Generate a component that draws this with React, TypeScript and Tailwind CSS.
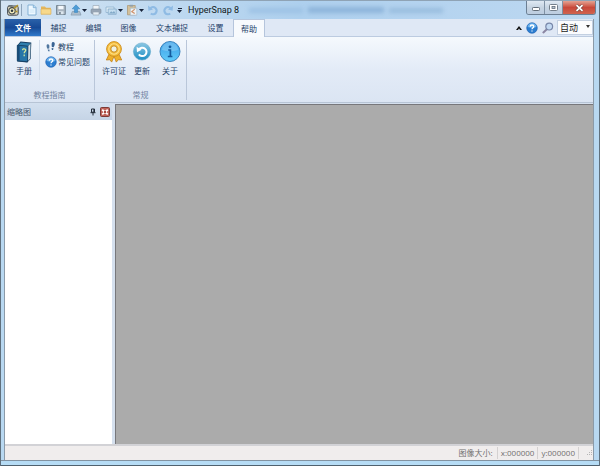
import React from 'react';

const tabs = ['捕捉', '编辑', '图像', '文本捕捉', '设置', '帮助'];

const Caret = () => (
  <svg viewBox="0 0 5 3" className="w-[5px] h-[3px] shrink-0 fill-[#17233a]">
    <path d="M0 0h5L2.5 3z" />
  </svg>
);

const LogoIcon = () => (
  <svg viewBox="0 0 12 12" className="w-3 h-3">
    <rect x=".6" y="2" width="10.6" height="9.2" rx="1.6" fill="#d9d3bb" stroke="#454b50" />
    <circle cx="5" cy="6.8" r="3.2" fill="#f7efbf" stroke="#38434b" strokeWidth="1.1" />
    <circle cx="5" cy="6.8" r="1.3" fill="#303a40" />
    <path d="M7 4.5l4-3.4M8.4 7.4h2" stroke="#b19326" strokeWidth="1.5" />
    <path d="M1.5 1.8h4" stroke="#5b6468" />
  </svg>
);

const NewIcon = () => (
  <svg viewBox="0 0 10 12" className="w-[10px] h-3">
    <path d="M1 1h5.5L9 3.5V11H1z" fill="#eef8ff" stroke="#78a9d0" strokeWidth=".9" />
    <path d="M6.3 1v2.7H9" fill="#b8dcf5" stroke="#78a9d0" strokeWidth=".8" />
    <path d="M2.5 6h5M2.5 8h5" stroke="#c2e0f4" strokeWidth=".8" />
  </svg>
);

const OpenIcon = () => (
  <svg viewBox="0 0 12 12" className="w-3 h-3">
    <path d="M1 2.5h4l1 1.3h4.8v6.4H1z" fill="#e4b65a" />
    <path d="M1 5h10v5.2H1z" fill="#f7d98b" stroke="#d8ab54" strokeWidth=".6" />
  </svg>
);

const SaveIcon = () => (
  <svg viewBox="0 0 12 12" className="w-3 h-3">
    <path d="M1.5 1.5h8.8v9H1.5z" fill="#a9b5c0" stroke="#71818f" strokeWidth=".9" />
    <path d="M3.3 1.8h5.2v3.4H3.3z" fill="#f3f8fc" />
    <path d="M3.3 7.3h5.2v3H3.3z" fill="#dde7ee" />
    <path d="M4.2 8h1.5v2.3H4.2z" fill="#6c7c8a" />
  </svg>
);

const UploadIcon = () => (
  <svg viewBox="0 0 12 12" className="w-3 h-3">
    <path d="M2.3 7.5h7.4l1.3 3.6H1z" fill="#aebfcd" stroke="#7d93a6" strokeWidth=".6" />
    <path d="M6 .8l3.8 4H7.6v3.6H4.4V4.8H2.2z" fill="#4d9cd6" stroke="#327fb8" strokeWidth=".5" />
  </svg>
);

const PrintIcon = () => (
  <svg viewBox="0 0 12 12" className="w-3 h-3">
    <path d="M3 1.5h6v4H3z" fill="#f1f5f8" stroke="#94a1af" strokeWidth=".6" />
    <rect x="1" y="5" width="10" height="4.5" rx="1" fill="#97a5b5" stroke="#7a899a" strokeWidth=".6" />
    <path d="M3 8h6v3H3z" fill="#e5edf3" stroke="#94a1af" strokeWidth=".6" />
  </svg>
);

const PictureIcon = () => (
  <svg viewBox="0 0 12 12" className="w-3 h-3">
    <path d="M1 3h8v5.5H1z" fill="#dcebf6" stroke="#91b2ce" strokeWidth=".8" />
    <path d="M3.2 5h8v5.3h-8z" fill="#c5def0" stroke="#86abc9" strokeWidth=".8" />
    <path d="M4 9.5l2.2-2.3 1.3 1.2L9 6.9l1.6 2.6z" fill="#82a9c8" />
  </svg>
);

const PasteIcon = () => (
  <svg viewBox="0 0 12 12" className="w-3 h-3">
    <path d="M1.5 1.5h7.7v9.3H1.5z" fill="#d3c09a" stroke="#ad9b7a" strokeWidth=".8" />
    <path d="M3.6.8h3.5v1.8H3.6z" fill="#93a0a9" />
    <path d="M4.3 4.2h6.5v7H4.3z" fill="#eef3f6" stroke="#9db0be" strokeWidth=".6" />
    <path d="M8.7 5.3L5.8 7.6l2.9 2" fill="none" stroke="#d0946f" strokeWidth="1.2" />
  </svg>
);

const UndoIcon = ({ flip = false }: { flip?: boolean }) => (
  <svg viewBox="0 0 12 12" className="w-3 h-3">
    <g transform={flip ? 'translate(12 0) scale(-1 1)' : undefined}>
      <path d="M3.4 4.2a3.6 3.6 0 11.4 5.3" fill="none" stroke="#8fbbe4" strokeWidth="2.2" />
      <path d="M1 1.6l.4 5.2 4.6-1.2z" fill="#8fbbe4" />
    </g>
  </svg>
);

const HelpIcon = () => (
  <svg viewBox="0 0 12 12" className="w-3 h-3 shrink-0">
    <circle cx="6" cy="6" r="5.3" fill="#2b7dd0" stroke="#1f5fae" strokeWidth=".6" />
    <path d="M1.5 5a4.6 4.6 0 019 0Q6 6.5 1.5 5z" fill="#6cb2ec" />
    <path d="M4.2 4.6C4.3 2.4 7.8 2.5 7.8 4.5 7.8 5.8 6 5.8 6 7.3M6 8.4v1.2" fill="none" stroke="#fff" strokeWidth="1.3" />
  </svg>
);

const SearchIcon = () => (
  <svg viewBox="0 0 12 12" className="w-3 h-3">
    <path d="M4.8 7.2L1.4 10.4" stroke="#8b86a3" strokeWidth="2" strokeLinecap="round" />
    <circle cx="7.2" cy="4.6" r="3.4" fill="#c3d9f2" stroke="#7887a9" strokeWidth="1.2" />
  </svg>
);

const BookIcon = () => (
  <svg viewBox="0 0 18 24" className="w-[18px] h-6">
    <path d="M2.2 5.4L5.5 1.6l10.8 1-.6 16.2-3.4 3.6-10.1-1z" fill="#174166" />
    <path d="M3.3 5.2l2.6-2.7 9.6.9-2.6 2.7z" fill="#2f7fae" />
    <path d="M13 6.2l2.6-2.6-.5 15-2.5 2.6z" fill="#dce6ea" stroke="#4e7088" strokeWidth=".4" />
    <path d="M2.3 5.3l10.6.9-.4 15.6-10.2-1z" fill="#2775a8" stroke="#143d61" strokeWidth=".8" />
    <path d="M2.6 5.8l2 .2v14.8l-2-.3z" fill="#184a78" />
    <path d="M7.6 10.2c0-2 3.2-1.8 3.1 0 0 1.3-1.5 1.3-1.5 3M9.2 14.4v1.8" fill="none" stroke="#d2e79d" strokeWidth="1.3" />
  </svg>
);

const StepsIcon = () => (
  <svg viewBox="0 0 12 12" className="w-3 h-3 shrink-0">
    <path d="M1.6 4.2C1.9 2.6 4.3 3 4.4 5l-.2 2.6-1.8.2C1.8 6.6 1.4 5.4 1.6 4.2z" fill="#50779f" />
    <path d="M2.6 8.6l1.8-.2c.8 2.4-1.2 3-1.8.2z" fill="#50779f" />
    <path d="M6.7 2.4C7.2.2 10 .6 9.8 3c-.1 1.2-.6 2.2-1.2 3.3L6.9 6c-.3-1.3-.4-2.4-.2-3.6z" fill="#3b6594" />
    <path d="M6.7 6.9l1.8.3c-.2 2.8-2.3 2.2-1.8-.3z" fill="#3b6594" />
  </svg>
);

const MedalIcon = () => (
  <svg viewBox="0 0 20 24" className="w-5 h-6">
    <path d="M6 12L2.3 20l3.4-.3 2 2.4L10.5 15zM14 12l3.7 8-3.4-.3-2 2.4L9.5 15z" fill="#efb12d" stroke="#c38217" strokeWidth=".8" />
    <circle cx="10" cy="9" r="7.4" fill="#f5bd3b" stroke="#cd8c1c" strokeWidth=".9" />
    <circle cx="10" cy="9" r="5.2" fill="none" stroke="#ffe08a" strokeWidth="1.1" />
    <circle cx="10" cy="9" r="3.2" fill="#eef1e4" stroke="#c98a1c" strokeWidth="1" />
  </svg>
);

const UpdateIcon = () => (
  <svg viewBox="0 0 20 24" className="w-5 h-6">
    <defs>
      <linearGradient id="update" x2="0" y2="1">
        <stop stopColor="#8bc7e3" />
        <stop offset="1" stopColor="#1d8ec4" />
      </linearGradient>
    </defs>
    <circle cx="10" cy="11.5" r="8.6" fill="url(#update)" stroke="#62a7ca" strokeWidth=".6" />
    <path d="M6.8 9.6a4.2 4.2 0 11.1 4.7" fill="none" stroke="#fff" strokeWidth="2" />
    <path d="M4.6 6.8l.4 5.4 4.6-2.4z" fill="#fff" />
  </svg>
);

const AboutIcon = () => (
  <svg viewBox="0 0 22 24" className="w-[22px] h-6">
    <defs>
      <linearGradient id="about" x2="0" y2="1">
        <stop stopColor="#3b9be4" />
        <stop offset="1" stopColor="#62cdfb" />
      </linearGradient>
    </defs>
    <circle cx="11" cy="11.5" r="10" fill="url(#about)" stroke="#2c79b7" strokeWidth=".9" />
    <path d="M3 10a8 8 0 0116 0q-8 2.5-16 0z" fill="#8bcdf6" opacity=".55" />
    <circle cx="11" cy="6.8" r="1.4" fill="#155b9d" />
    <path d="M9.2 10h2.2v6.3M8.8 16.5h4.6" fill="none" stroke="#155b9d" strokeWidth="1.7" />
  </svg>
);

const BigButton = ({ icon, label }: { icon: React.ReactNode; label: string }) => (
  <button className="flex flex-col items-center gap-[2px] min-w-7">
    {icon}
    <span className="leading-[10px]">{label}</span>
  </button>
);

const TitleBar = () => (
  <header className="flex items-center h-[19px] shrink-0 pl-[6px] pr-[3px] border-t border-[#8fa3b5] bg-gradient-to-r from-[#d3e4f3] via-[#aed0ee] to-[#bdd8f1]">
    <LogoIcon />
    <span className="w-px h-3 mx-[2px] bg-[#8fa6bd]" />
    <div className="flex items-center gap-[3px]">
      <button aria-label="新建" className="ml-[3px]"><NewIcon /></button>
      <button aria-label="打开"><OpenIcon /></button>
      <button aria-label="保存"><SaveIcon /></button>
      <button aria-label="上传" className="flex items-center"><UploadIcon /><Caret /></button>
      <button aria-label="打印"><PrintIcon /></button>
      <button aria-label="复制" className="flex items-center gap-px"><PictureIcon /><Caret /></button>
      <button aria-label="粘贴" className="flex items-center gap-px"><PasteIcon /><Caret /></button>
      <button aria-label="撤销"><UndoIcon /></button>
      <button aria-label="重做"><UndoIcon flip /></button>
      <button aria-label="自定义" className="flex flex-col items-center gap-px">
        <span className="w-1 h-px bg-[#17233a]" />
        <Caret />
      </button>
    </div>
    <h1 className="ml-[6px] font-[Roboto,sans-serif] text-[9px] leading-3 text-[#101820] whitespace-nowrap">HyperSnap 8</h1>
    {/* blurred page behind the glass */}
    <div className="flex-1 min-w-0 h-full pl-[10px] overflow-hidden">
      <div className="flex items-center gap-[5px] h-full blur-[2px]">
        <span className="w-[54px] h-[5px] bg-[#9cc1e4]" />
        <span className="w-[76px] h-[6px] bg-[#8db4da]" />
        <span className="w-[54px] h-[5px] bg-[#98bcde]" />
      </div>
    </div>
    <div className="flex self-start h-[14px] border border-t-0 border-[#6c7f93] rounded-b-[3px] overflow-hidden">
      <button aria-label="最小化" className="w-[18px] flex items-center justify-center bg-gradient-to-b from-[#dfe9f3] via-[#c6d4e2] to-[#bccde0] border-r border-[#7f91a4]">
        <svg viewBox="0 0 8 4" className="w-2 h-1 mt-[2px]">
          <rect x=".5" y=".5" width="7" height="3" rx=".8" fill="#fff" stroke="#626d79" />
        </svg>
      </button>
      <button aria-label="最大化" className="w-[18px] flex items-center justify-center bg-gradient-to-b from-[#dfe9f3] via-[#c6d4e2] to-[#bccde0] border-r border-[#7f91a4]">
        <svg viewBox="0 0 9 7" className="w-[9px] h-[7px]">
          <rect x=".5" y=".5" width="8" height="6" rx="1" fill="#fff" stroke="#727e8a" />
          <rect x="3" y="2.5" width="3" height="2" fill="#b6c4d1" stroke="#626e7a" strokeWidth=".8" />
        </svg>
      </button>
      <button aria-label="关闭" className="w-8 flex items-center justify-center bg-gradient-to-b from-[#e3a293] via-[#c8483a] to-[#d0634f]">
        <svg viewBox="0 0 9 8" className="w-[9px] h-2">
          <path d="M1.5 1.2l6 5.6m0-5.6l-6 5.6" stroke="#71463f" strokeWidth="3" />
          <path d="M1.5 1.2l6 5.6m0-5.6l-6 5.6" stroke="#fff" strokeWidth="1.8" />
        </svg>
      </button>
    </div>
  </header>
);

const TabBar = () => (
  <nav className="flex items-stretch h-[18px] shrink-0 bg-[#dfe8f5] border-b border-[#bccbe0] text-[#26436b]">
    <button className="w-9 bg-gradient-to-b from-[#2b62aa] via-[#174a96] to-[#2f79ca] text-white font-bold">文件</button>
    {tabs.map((tab) => (
      <button
        key={tab}
        className={
          tab === '帮助'
            ? 'w-8 -mb-px bg-[#f7fafd] border-x border-t border-[#b5c5dc]'
            : tab === '文本捕捉' ? 'px-[10px]' : 'px-[9px] min-w-[35px]'
        }
      >
        {tab}
      </button>
    ))}
    <div className="flex items-center ml-auto">
      <button aria-label="折叠功能区" className="mr-1">
        <svg viewBox="0 0 6 4" className="w-[6px] h-1"><path d="M0 4l3-4 3 4H4L3 2.6 2 4z" fill="#111" /></svg>
      </button>
      <button aria-label="帮助" className="mr-1"><HelpIcon /></button>
      <button aria-label="缩放" className="mr-[3px]"><SearchIcon /></button>
      <label className="relative flex items-center">
        <select aria-label="缩放比例" className="appearance-none w-[36px] h-[15px] pl-[2px] bg-[#fbfcfe] border border-[#c3d0e1] text-[9px] leading-[13px] text-[#1b1b1b]">
          <option>自动</option>
        </select>
        <svg viewBox="0 0 4 3" className="absolute right-[3px] top-[5px] w-1 h-[3px] pointer-events-none"><path d="M0 0h4L2 3z" fill="#333" /></svg>
      </label>
    </div>
  </nav>
);

const Ribbon = () => (
  <section className="flex h-[66px] shrink-0 pt-[3px] pb-[2px] bg-gradient-to-b from-[#f5f9fd] via-[#e3ebf7] to-[#dbe5f3] border-b border-[#b7c4d5] text-[#243f66]">
    <div className="flex flex-col justify-between w-[90px] border-r border-[#b9c6d9]">
      <div className="flex items-start">
        <div className="flex w-[35px] h-10 pl-[5px] border-r border-[#d0dbe9]">
          <BigButton icon={<BookIcon />} label="手册" />
        </div>
        <div className="flex flex-col gap-[3px] pl-[5px] pt-px">
          <button className="flex items-center gap-[1px]"><StepsIcon /><span>教程</span></button>
          <button className="flex items-center gap-[1px]"><HelpIcon /><span className="whitespace-nowrap">常见问题</span></button>
        </div>
      </div>
      <h2 className="text-center leading-[10px] text-[#7183a0]">教程指南</h2>
    </div>
    <div className="flex flex-col justify-between w-[92px] border-r border-[#b9c6d9]">
      <div className="flex pl-[5px]">
        <BigButton icon={<MedalIcon />} label="许可证" />
        <BigButton icon={<UpdateIcon />} label="更新" />
        <BigButton icon={<AboutIcon />} label="关于" />
      </div>
      <h2 className="text-center leading-[10px] text-[#7183a0]">常规</h2>
    </div>
  </section>
);

const App = () => {
  return (
    <div className="h-screen flex flex-col overflow-hidden border-x border-[#60707d] bg-[#b8d8f1] font-['Open_Sans','Noto_Sans_CJK_SC',sans-serif] text-[8px] leading-3">
      <TitleBar />
      <div className="flex-1 min-h-0 flex flex-col ml-[3px] mr-[5px] border-x border-[#8b9aa8]">
        <TabBar />
        <Ribbon />
        <main className="flex flex-1 min-h-0 bg-[#d5e0ee]">
          <aside className="w-[107px] shrink-0 flex flex-col bg-white">
            <div className="flex items-center h-[17px] shrink-0 pl-[2px] pr-[2px] bg-gradient-to-b from-[#d3e0ef] to-[#c5d4e6] text-[#44566d]">
              <h2 className="mr-auto">缩略图</h2>
              <button aria-label="固定" className="mr-1">
                <svg viewBox="0 0 6 8" className="w-[6px] h-2">
                  <path d="M1.5 1h3v3.2h-3zM.5 4.7h5M3 5v2.5M3.9 1v3" fill="none" stroke="#222c38" />
                </svg>
              </button>
              <button aria-label="关闭面板">
                <svg viewBox="0 0 10 10" className="w-[10px] h-[10px]">
                  <rect x=".5" y=".5" width="9" height="9" rx="1" fill="#c0635a" stroke="#7c3b36" />
                  <path d="M2.2 2.8l5.6 4.6m0-4.6L2.2 7.4" stroke="#fff" strokeWidth="1.8" />
                  <rect x="4" y="4" width="2" height="2" fill="#a4483f" />
                </svg>
              </button>
            </div>
          </aside>
          <div className="flex-1 ml-[3px] mt-px border-t border-l border-[#77777b] bg-[#ababab]" />
        </main>
        <footer className="flex items-center justify-end h-4 shrink-0 bg-[#f0eded] border-t-2 border-[#d2d2d6] text-[#707070]">
          <span className="pr-1">图像大小:</span>
          <span className="px-[3px] border-l border-[#d4d1d1]">x:000000</span>
          <span className="px-[3px] mr-[6px] border-x border-[#d4d1d1]">y:000000</span>
          <svg viewBox="0 0 8 8" className="w-2 h-2 fill-[#b5b5b5]">
            <path d="M6 1h1v1H6zM4 3h1v1H4zM6 3h1v1H6zM2 5h1v1H2zM4 5h1v1H4zM6 5h1v1H6z" />
          </svg>
        </footer>
      </div>
      <div className="h-[6px] shrink-0 border-y border-t-[#8292a1] border-b-[#50616e] bg-[#b6dcf5]" />
    </div>
  );
};

export default App;
